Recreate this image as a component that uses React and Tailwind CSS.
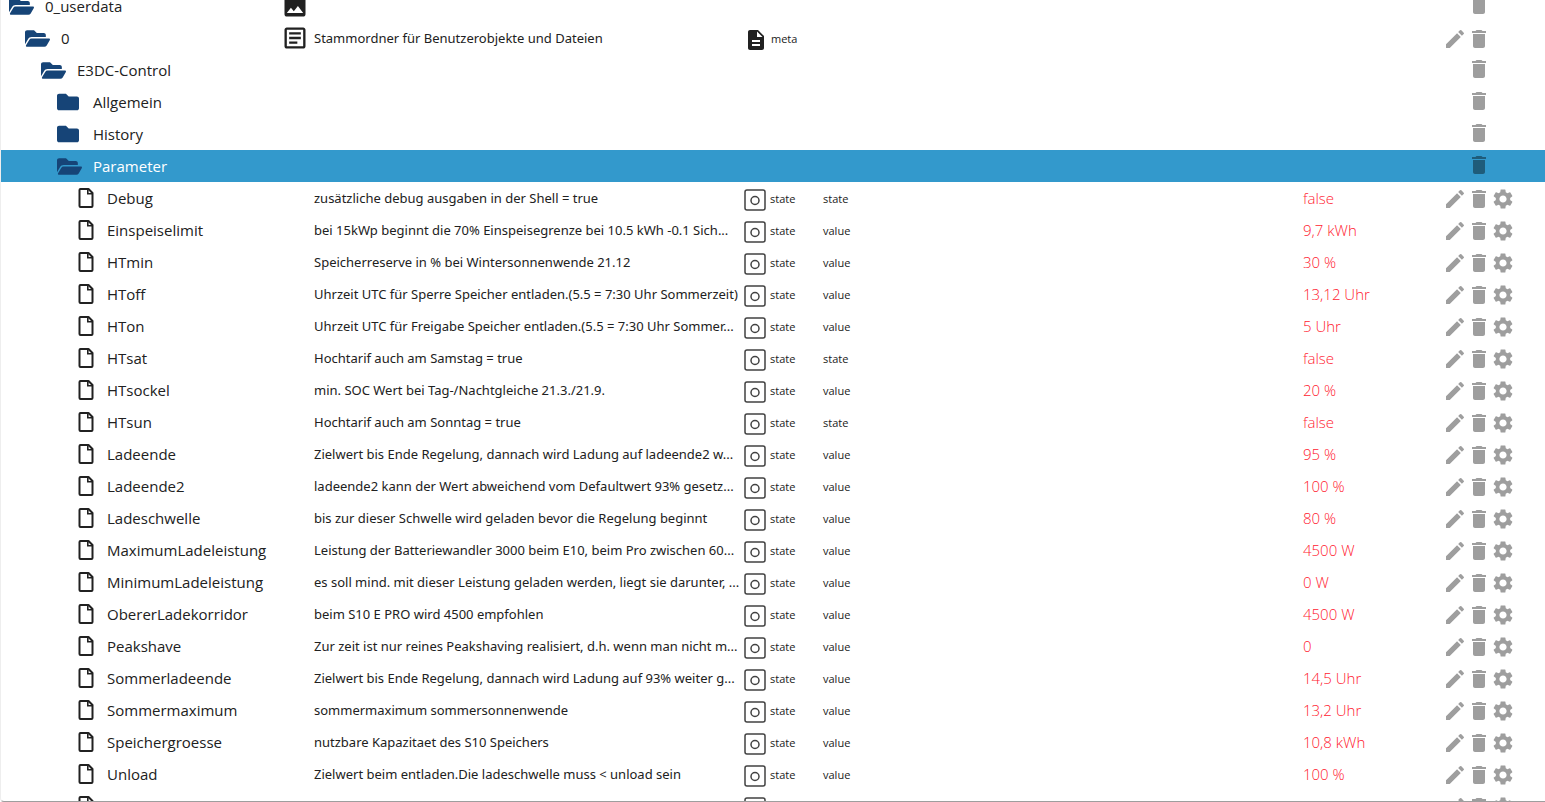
import { FaFolder, FaFolderOpen } from 'react-icons/fa';
import { MdDelete, MdDescription, MdEdit, MdImage, MdOutlineArticle, MdSettings } from 'react-icons/md';

const folders = [
  { name: '0_userdata', indent: 'pl-2', open: true, icon: 'image' },
  {
    name: '0',
    indent: 'pl-6',
    open: true,
    icon: 'article',
    desc: 'Stammordner für Benutzerobjekte und Dateien',
    type: 'meta',
    editable: true,
  },
  { name: 'E3DC-Control', indent: 'pl-10', open: true },
  { name: 'Allgemein', indent: 'pl-14' },
  { name: 'History', indent: 'pl-14' },
  { name: 'Parameter', indent: 'pl-14', open: true, selected: true },
];

const states = [
  { name: 'Debug', desc: 'zusätzliche debug ausgaben in der Shell = true', role: 'state', value: 'false' },
  { name: 'Einspeiselimit', desc: 'bei 15kWp beginnt die 70% Einspeisegrenze bei 10.5 kWh -0.1 Sich...', role: 'value', value: '9,7 kWh' },
  { name: 'HTmin', desc: 'Speicherreserve in % bei Wintersonnenwende 21.12', role: 'value', value: '30 %' },
  { name: 'HToff', desc: 'Uhrzeit UTC für Sperre Speicher entladen.(5.5 = 7:30 Uhr Sommerzeit)', role: 'value', value: '13,12 Uhr' },
  { name: 'HTon', desc: 'Uhrzeit UTC für Freigabe Speicher entladen.(5.5 = 7:30 Uhr Sommer...', role: 'value', value: '5 Uhr' },
  { name: 'HTsat', desc: 'Hochtarif auch am Samstag = true', role: 'state', value: 'false' },
  { name: 'HTsockel', desc: 'min. SOC Wert bei Tag-/Nachtgleiche 21.3./21.9.', role: 'value', value: '20 %' },
  { name: 'HTsun', desc: 'Hochtarif auch am Sonntag = true', role: 'state', value: 'false' },
  { name: 'Ladeende', desc: 'Zielwert bis Ende Regelung, dannach wird Ladung auf ladeende2 w...', role: 'value', value: '95 %' },
  { name: 'Ladeende2', desc: 'ladeende2 kann der Wert abweichend vom Defaultwert 93% gesetz...', role: 'value', value: '100 %' },
  { name: 'Ladeschwelle', desc: 'bis zur dieser Schwelle wird geladen bevor die Regelung beginnt', role: 'value', value: '80 %' },
  { name: 'MaximumLadeleistung', desc: 'Leistung der Batteriewandler 3000 beim E10, beim Pro zwischen 60...', role: 'value', value: '4500 W' },
  { name: 'MinimumLadeleistung', desc: 'es soll mind. mit dieser Leistung geladen werden, liegt sie darunter, ...', role: 'value', value: '0 W' },
  { name: 'ObererLadekorridor', desc: 'beim S10 E PRO wird 4500 empfohlen', role: 'value', value: '4500 W' },
  { name: 'Peakshave', desc: 'Zur zeit ist nur reines Peakshaving realisiert, d.h. wenn man nicht m...', role: 'value', value: '0' },
  { name: 'Sommerladeende', desc: 'Zielwert bis Ende Regelung, dannach wird Ladung auf 93% weiter g...', role: 'value', value: '14,5 Uhr' },
  { name: 'Sommermaximum', desc: 'sommermaximum sommersonnenwende', role: 'value', value: '13,2 Uhr' },
  { name: 'Speichergroesse', desc: 'nutzbare Kapazitaet des S10 Speichers', role: 'value', value: '10,8 kWh' },
  { name: 'Unload', desc: 'Zielwert beim entladen.Die ladeschwelle muss < unload sein', role: 'value', value: '100 %' },
  { name: 'UntererLadekorridor' },
];

const DocumentIcon = () => (
  <svg viewBox="0 0 16 20" className="h-5 w-4 shrink-0" fill="none" stroke="currentColor" strokeWidth="2">
    <path d="M10.5 1H2.5Q1.5 1 1.5 2V18Q1.5 19 2.5 19H13.5Q14.5 19 14.5 18V5Z" strokeLinejoin="round" />
    <path d="M9.8 1V5.8H14.5" strokeWidth="1.6" />
  </svg>
);

const StateIcon = () => (
  <svg viewBox="0 0 22 22" className="size-[22px] shrink-0 text-[#424242]" fill="none" stroke="currentColor" strokeWidth="1.5">
    <rect x="1" y="1" width="20" height="20" rx="2" />
    <circle cx="11" cy="11.5" r="4" />
  </svg>
);

const IconButton = ({ label, children }) => (
  <button type="button" aria-label={label} className="flex size-6 items-center justify-center">
    {children}
  </button>
);

const Actions = ({ name, editable, settings }) => (
  <div className={`flex h-8 items-center pl-0.5 ${editable ? 'pt-0.5' : 'pb-0.5'}`}>
    {editable ? (
      <IconButton label={`Edit ${name}`}><MdEdit className="size-6" /></IconButton>
    ) : (
      <span className="w-6" />
    )}
    <IconButton label={`Delete ${name}`}><MdDelete className="size-6" /></IconButton>
    {settings && (
      <IconButton label={`Settings ${name}`}><MdSettings className="size-6" /></IconButton>
    )}
  </div>
);

const FolderRow = ({ item }) => {
  const Folder = item.open ? FaFolderOpen : FaFolder;
  return (
    <tr className={item.selected ? 'bg-[#3399cc] text-white' : ''}>
      <td className="p-0">
        <div className={`flex h-8 items-center ${item.indent}`}>
          <Folder className={`shrink-0 text-[#164477] ${item.open ? 'size-[25px]' : 'size-[22px]'}`} />
          <span className={item.open ? 'pl-[11px]' : 'pl-3.5'}>{item.name}</span>
        </div>
      </td>
      <td className="p-0 font-['Noto_Sans','Open_Sans',sans-serif] text-[13px]">
        <div className="flex h-8 items-center gap-[5px]">
          {item.icon === 'image' && <MdImage className="size-7" />}
          {item.icon === 'article' && <MdOutlineArticle className="size-7" />}
          <span className="pt-0.5">{item.desc}</span>
        </div>
      </td>
      <td className="p-0 text-[11px]">
        {item.type && (
          <div className="flex h-8 items-center gap-[3px] pt-1 pl-px">
            <MdDescription className="size-6" />
            <span className="pb-0.5">{item.type}</span>
          </div>
        )}
      </td>
      <td />
      <td />
      <td className={`p-0 ${item.selected ? 'text-[#1f5c7a]' : 'text-[#9e9e9e]'}`}>
        <Actions name={item.name} editable={item.editable} />
      </td>
    </tr>
  );
};

const StateRow = ({ item }) => (
  <tr>
    <td className="p-0">
      <div className="flex h-8 items-center gap-[13px] pl-[77px]">
        <DocumentIcon />
        {item.name}
      </div>
    </td>
    <td className="p-0 pt-0.5 pl-[33px] font-['Noto_Sans','Open_Sans',sans-serif] text-[13px] whitespace-nowrap">
      {item.desc}
    </td>
    <td className="p-0 text-[11px]">
      <div className="flex h-8 items-center gap-1 pt-1 pl-px">
        <StateIcon />
        <span className="pb-0.5">state</span>
      </div>
    </td>
    <td className="p-0 pt-0.5 text-[11px]">{item.role}</td>
    <td className="p-0 font-light whitespace-nowrap text-[#ff1a30]">{item.value}</td>
    <td className="p-0 text-[#9e9e9e]">
      <Actions name={item.name} editable settings />
    </td>
  </tr>
);

const App = () => (
  <main className="h-screen overflow-hidden rounded-bl border-b border-l border-b-[#9e9e9e] border-l-[#eeeeee] bg-white font-['Open_Sans','Noto_Sans',sans-serif] text-[15px] text-[#212121]">
    {/* The list is scrolled down by part of a row */}
    <table className="-mt-2.5 w-full table-fixed border-collapse">
      <colgroup>
        <col className="w-[280px]" />
        <col className="w-[462px]" />
        <col className="w-[80px]" />
        <col />
        <col className="w-[138px]" />
        <col className="w-[104px]" />
      </colgroup>
      <tbody>
        {folders.map((item) => (
          <FolderRow key={item.name} item={item} />
        ))}
        {states.map((item) => (
          <StateRow key={item.name} item={item} />
        ))}
      </tbody>
    </table>
  </main>
);

export default App;
